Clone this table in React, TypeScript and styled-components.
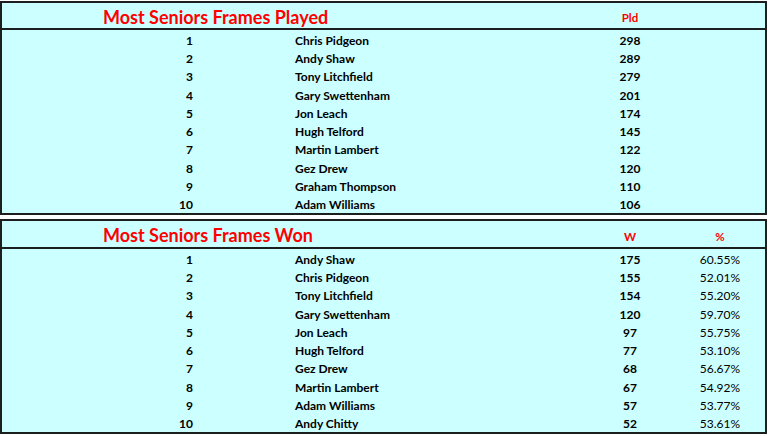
import React from 'react'
import styled, { createGlobalStyle } from 'styled-components'

const GlobalStyle = createGlobalStyle`
  html, body {
    margin: 0;
    padding: 0;
    background: #ffffff;
  }
  body {
    font-family: Lato, "Open Sans", "Liberation Sans", sans-serif;
  }
`

interface Entry {
  rank: number
  name: string
  value: number
  pct?: string
}

const played: Entry[] = [
  { rank: 1, name: 'Chris Pidgeon', value: 298 },
  { rank: 2, name: 'Andy Shaw', value: 289 },
  { rank: 3, name: 'Tony Litchfield', value: 279 },
  { rank: 4, name: 'Gary Swettenham', value: 201 },
  { rank: 5, name: 'Jon Leach', value: 174 },
  { rank: 6, name: 'Hugh Telford', value: 145 },
  { rank: 7, name: 'Martin Lambert', value: 122 },
  { rank: 8, name: 'Gez Drew', value: 120 },
  { rank: 9, name: 'Graham Thompson', value: 110 },
  { rank: 10, name: 'Adam Williams', value: 106 },
]

const won: Entry[] = [
  { rank: 1, name: 'Andy Shaw', value: 175, pct: '60.55%' },
  { rank: 2, name: 'Chris Pidgeon', value: 155, pct: '52.01%' },
  { rank: 3, name: 'Tony Litchfield', value: 154, pct: '55.20%' },
  { rank: 4, name: 'Gary Swettenham', value: 120, pct: '59.70%' },
  { rank: 5, name: 'Jon Leach', value: 97, pct: '55.75%' },
  { rank: 6, name: 'Hugh Telford', value: 77, pct: '53.10%' },
  { rank: 7, name: 'Gez Drew', value: 68, pct: '56.67%' },
  { rank: 8, name: 'Martin Lambert', value: 67, pct: '54.92%' },
  { rank: 9, name: 'Adam Williams', value: 57, pct: '53.77%' },
  { rank: 10, name: 'Andy Chitty', value: 52, pct: '53.61%' },
]

const BORDER = '#1b1f1d'
const CYAN = '#ccffff'

const Sheet = styled.div`
  width: 767px;
  height: 436px;
  box-sizing: border-box;
  padding-top: 1px;
`

const Section = styled.section<{ $last?: boolean }>`
  background: ${CYAN};
  border: 2px solid ${BORDER};
  margin-bottom: ${p => (p.$last ? 0 : 4)}px;
`

const columns = '195px 383px 100px 80px 1fr'

const HeaderRow = styled.div<{ $h: number }>`
  display: grid;
  grid-template-columns: ${columns};
  height: ${p => p.$h}px;
  align-items: center;
  border-bottom: 2px solid ${BORDER};
  color: #ff0000;
  font-weight: 700;
`

const Title = styled.div`
  grid-column: 1 / 3;
  padding-left: 101px;
  padding-top: 2px;
  font-size: 18px;
  line-height: 1;
`

const ColHead = styled.div`
  font-size: 11.5px;
  text-align: center;
  padding-top: 4px;
`

const Body = styled.div`
  display: grid;
  grid-template-rows: repeat(10, 1fr);
  height: 183px;
`

const Row = styled.div`
  display: grid;
  grid-template-columns: ${columns};
  align-items: center;
  padding-top: 2px;
  font-size: 12px;
  color: #000;
`

const Rank = styled.div`
  text-align: right;
  padding-right: 4px;
  font-weight: 700;
`

const Name = styled.div`
  padding-left: 98px;
  font-weight: 700;
`

const Value = styled.div`
  text-align: center;
  font-weight: 700;
`

const Pct = styled.div`
  text-align: center;
  font-weight: 400;
`

const Table = ({
  title,
  valueHead,
  pctHead,
  rows,
  headHeight,
  last,
}: {
  title: string
  valueHead: string
  pctHead?: string
  rows: Entry[]
  headHeight: number
  last?: boolean
}) => (
  <Section $last={last}>
    <HeaderRow $h={headHeight}>
      <Title>{title}</Title>
      <ColHead>{valueHead}</ColHead>
      <ColHead>{pctHead}</ColHead>
    </HeaderRow>
    <Body>
      {rows.map(r => (
        <Row key={r.rank}>
          <Rank>{r.rank}</Rank>
          <Name>{r.name}</Name>
          <Value>{r.value}</Value>
          <Pct>{r.pct}</Pct>
        </Row>
      ))}
    </Body>
  </Section>
)

export default function App() {
  return (
    <Sheet>
      <GlobalStyle />
      <Table title="Most Seniors Frames Played" valueHead="Pld" rows={played} headHeight={25} />
      <Table title="Most Seniors Frames Won" valueHead="W" pctHead="%" rows={won} headHeight={26} last />
    </Sheet>
  )
}
